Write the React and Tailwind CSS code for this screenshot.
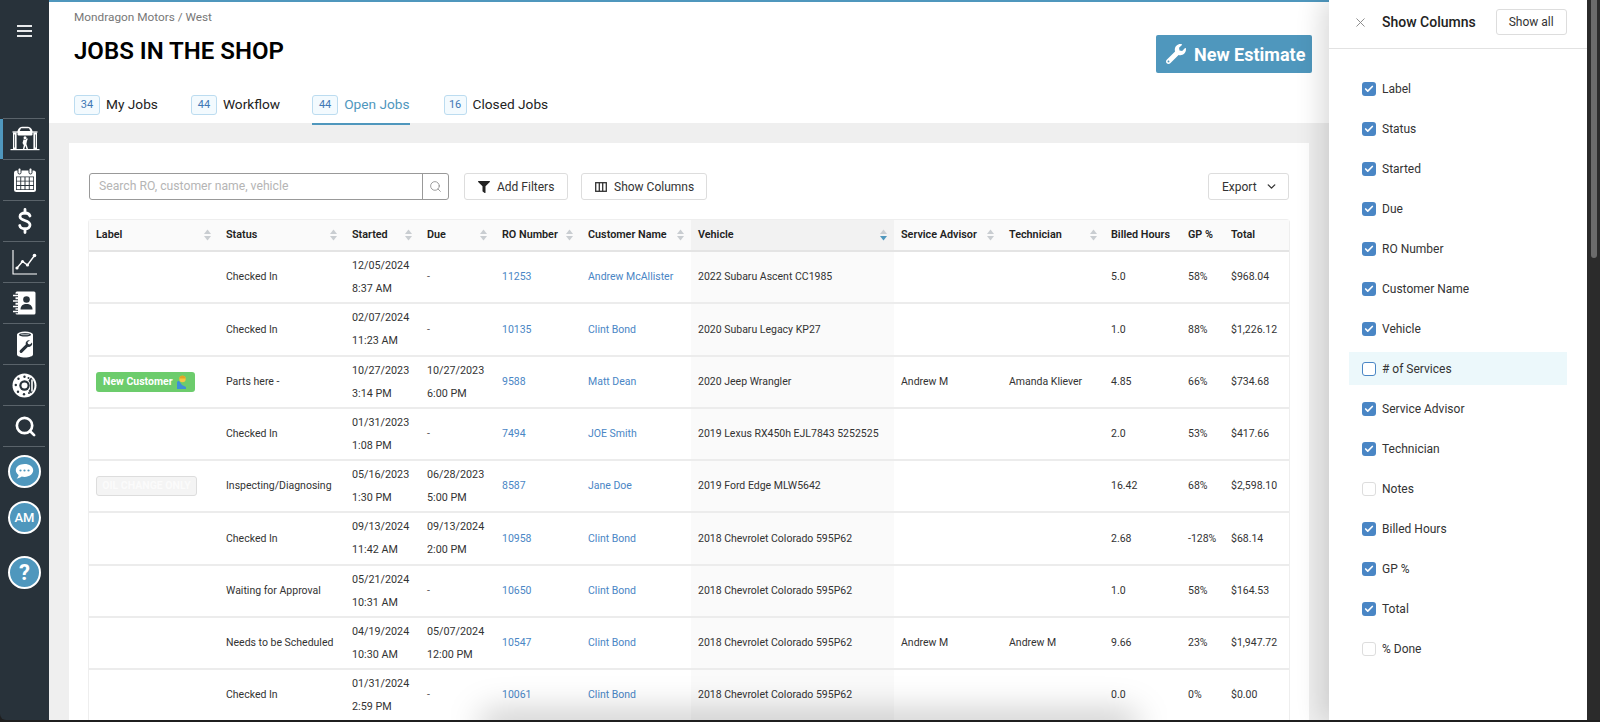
import { Search, X, ChevronDown, Check } from 'lucide-react'
import { FaWrench, FaFilter } from 'react-icons/fa'

const GRID = 'grid grid-cols-[129px_126px_75px_75px_86px_111px_203px_107px_103px_76px_43px_66px]'

const columns = [
  { label: 'Label', sort: true, pad: 'pl-[7px]' },
  { label: 'Status', sort: true, pad: 'pl-2' },
  { label: 'Started', sort: true, pad: 'pl-2' },
  { label: 'Due', sort: true, pad: 'pl-2' },
  { label: 'RO Number', sort: true, pad: 'pl-2' },
  { label: 'Customer Name', sort: true, pad: 'pl-2' },
  { label: 'Vehicle', sort: true, active: true, pad: 'pl-[7px]' },
  { label: 'Service Advisor', sort: true, pad: 'pl-[7px]' },
  { label: 'Technician', sort: true, pad: 'pl-2' },
  { label: 'Billed Hours', pad: 'pl-[7px]' },
  { label: 'GP %', pad: 'pl-2' },
  { label: 'Total', pad: 'pl-2' },
]

const jobs = [
  { status: 'Checked In', started: ['12/05/2024', '8:37 AM'], ro: '11253', customer: 'Andrew McAllister', vehicle: '2022 Subaru Ascent CC1985', hours: '5.0', gp: '58%', total: '$968.04' },
  { status: 'Checked In', started: ['02/07/2024', '11:23 AM'], ro: '10135', customer: 'Clint Bond', vehicle: '2020 Subaru Legacy KP27', hours: '1.0', gp: '88%', total: '$1,226.12' },
  { label: 'new', status: 'Parts here -', started: ['10/27/2023', '3:14 PM'], due: ['10/27/2023', '6:00 PM'], ro: '9588', customer: 'Matt Dean', vehicle: '2020 Jeep Wrangler', advisor: 'Andrew M', tech: 'Amanda Kliever', hours: '4.85', gp: '66%', total: '$734.68' },
  { status: 'Checked In', started: ['01/31/2023', '1:08 PM'], ro: '7494', customer: 'JOE Smith', vehicle: '2019 Lexus RX450h EJL7843 5252525', hours: '2.0', gp: '53%', total: '$417.66' },
  { label: 'oil', status: 'Inspecting/Diagnosing', started: ['05/16/2023', '1:30 PM'], due: ['06/28/2023', '5:00 PM'], ro: '8587', customer: 'Jane Doe', vehicle: '2019 Ford Edge MLW5642', hours: '16.42', gp: '68%', total: '$2,598.10' },
  { status: 'Checked In', started: ['09/13/2024', '11:42 AM'], due: ['09/13/2024', '2:00 PM'], ro: '10958', customer: 'Clint Bond', vehicle: '2018 Chevrolet Colorado 595P62', hours: '2.68', gp: '-128%', total: '$68.14' },
  { status: 'Waiting for Approval', started: ['05/21/2024', '10:31 AM'], ro: '10650', customer: 'Clint Bond', vehicle: '2018 Chevrolet Colorado 595P62', hours: '1.0', gp: '58%', total: '$164.53' },
  { status: 'Needs to be Scheduled', started: ['04/19/2024', '10:30 AM'], due: ['05/07/2024', '12:00 PM'], ro: '10547', customer: 'Clint Bond', vehicle: '2018 Chevrolet Colorado 595P62', advisor: 'Andrew M', tech: 'Andrew M', hours: '9.66', gp: '23%', total: '$1,947.72' },
  { status: 'Checked In', started: ['01/31/2024', '2:59 PM'], ro: '10061', customer: 'Clint Bond', vehicle: '2018 Chevrolet Colorado 595P62', hours: '0.0', gp: '0%', total: '$0.00' },
]

const showColumns = [
  { label: 'Label', on: true },
  { label: 'Status', on: true },
  { label: 'Started', on: true },
  { label: 'Due', on: true },
  { label: 'RO Number', on: true },
  { label: 'Customer Name', on: true },
  { label: 'Vehicle', on: true },
  { label: '# of Services', hover: true },
  { label: 'Service Advisor', on: true },
  { label: 'Technician', on: true },
  { label: 'Notes' },
  { label: 'Billed Hours', on: true },
  { label: 'GP %', on: true },
  { label: 'Total', on: true },
  { label: '% Done' },
]

const tabs = [
  { count: 34, label: 'My Jobs', badge: 'w-[26px]', gap: 'mr-[33px]' },
  { count: 44, label: 'Workflow', badge: 'w-[26px]', gap: 'mr-[32px]' },
  { count: 44, label: 'Open Jobs', badge: 'w-[26px]', gap: 'mr-[34px]', active: true },
  { count: 16, label: 'Closed Jobs', badge: 'w-[23px]', gap: '' },
]

const LiftIcon = () => (
  <svg width="30" height="30" viewBox="0 0 30 30" fill="none">
    <path d="M.5 25.600h29" stroke="white" strokeWidth="1.200" />
    <rect x="3" y="8.500" width="3.600" height="16.500" fill="white" />
    <rect x="23.400" y="8.500" width="3.600" height="16.500" fill="white" />
    <path d="M4.500 10.500v13M25.500 10.500v13" stroke="#28323a" strokeWidth=".7" />
    <path d="M2.500 8h25" stroke="white" strokeWidth="1.300" />
    <path d="M7.500 7c1-2.800 2.800-4.200 4.800-4.200h5.400c2 0 3.800 1.400 4.800 4.200v3.500c0 .8-.8 1-1.500 1H9c-.7 0-1.500-.2-1.500-1z" fill="white" />
    <path d="M11 4.300h8l1.300 2.700H9.700z" fill="#28323a" />
    <circle cx="15" cy="13.800" r="1.500" fill="white" />
    <path d="M13.500 15.500l-1 3.500 1.300 2.200-.9 3.800h1.500l.9-3.500 1.200 3.500h1.500l-1.600-5 .5-2.700.9-2.500-1.100-.5-1 1.500z" fill="white" />
  </svg>
)

const CalendarIcon = () => (
  <svg width="24" height="26" viewBox="0 0 24 26" fill="none">
    <rect x="1" y="3.500" width="22" height="21.500" rx="2.500" fill="white" />
    <rect x="5" y="1" width="3" height="6" rx="1.500" fill="white" stroke="#28323a" strokeWidth="1" />
    <rect x="16" y="1" width="3" height="6" rx="1.500" fill="white" stroke="#28323a" strokeWidth="1" />
    <path d="M3 9.500h18v13.500H3z" fill="#28323a" />
    <path d="M3.800 10.300h3.500v3.400H3.800zM8.200 10.300h3.300v3.400H8.200zM12.500 10.300h3.300v3.400h-3.300zM16.700 10.300h3.500v3.400h-3.500zM3.800 14.600h3.500v3.400H3.800zM8.200 14.600h3.300v3.400H8.200zM12.500 14.600h3.300v3.400h-3.300zM16.700 14.600h3.500v3.400h-3.500zM3.800 18.900h3.500v3.300H3.800zM8.200 18.900h3.300v3.300H8.200zM12.500 18.900h3.300v3.300h-3.300zM16.700 18.900h3.500v3.300h-3.500z" fill="white" />
  </svg>
)

const DollarIcon = () => (
  <svg width="14" height="26" viewBox="0 0 14 26" fill="none" stroke="white" strokeWidth="2.800" strokeLinecap="round">
    <path d="M12 8c-.6-2-2.500-3-5-3-3 0-5 1.400-5 3.500 0 5 10 3 10 8.500 0 2.300-2.200 3.800-5 3.800-2.800 0-4.800-1.200-5.300-3.300" />
    <path d="M7 1.500V5M7 21v3.500" />
  </svg>
)

const ChartIcon = () => (
  <svg width="26" height="26" viewBox="0 0 26 26" fill="none">
    <path d="M1 1v24h24" stroke="white" strokeWidth="1.100" />
    <path d="M5 19l5.500-6.500 5 3.500 7-9.500" stroke="white" strokeWidth="1.400" />
    <circle cx="5" cy="19" r="1.600" fill="white" />
    <circle cx="10.500" cy="12.500" r="1.600" fill="white" />
    <circle cx="15.500" cy="16" r="1.600" fill="white" />
    <circle cx="22.500" cy="6.500" r="1.800" fill="white" />
  </svg>
)

const ContactsIcon = () => (
  <svg width="23" height="24" viewBox="0 0 23 24" fill="none">
    <rect x="2.500" y="0.500" width="20" height="23" rx="1.500" fill="white" />
    <path d="M0 4.500h5M0 10h5M0 15.500h5M0 20.500h5" stroke="#28323a" strokeWidth="3.400" />
    <path d="M0 4.500h4.500M0 10h4.500M0 15.500h4.500M0 20.500h4.500" stroke="white" strokeWidth="1.500" strokeLinecap="round" />
    <circle cx="13.500" cy="8.500" r="3.300" fill="#28323a" />
    <path d="M7.500 18.500c0-3.700 2.500-5.500 6-5.500s6 1.800 6 5.500z" fill="#28323a" />
  </svg>
)

const OilCanIcon = () => (
  <svg width="18" height="27" viewBox="0 0 18 27" fill="none">
    <path d="M1 3.500v20c0 1.600 3.600 3 8 3s8-1.400 8-3v-20z" fill="white" />
    <ellipse cx="9" cy="3.500" rx="8" ry="3" fill="white" />
    <ellipse cx="9" cy="3.700" rx="6" ry="1.700" fill="#28323a" />
    <ellipse cx="9" cy="3.500" rx="4.500" ry="0.800" fill="#9aa1a6" />
    <path d="M14 9.500a3.200 3.200 0 0 0-4.200 4L4 19.300a1.500 1.500 0 0 0 2.200 2.100l5.800-5.700a3.200 3.200 0 0 0 4-4.200l-2 2-2-.5-.5-2z" fill="#28323a" />
  </svg>
)

const WheelIcon = () => (
  <svg width="25" height="25" viewBox="0 0 25 25" fill="none">
    <circle cx="12.500" cy="12.500" r="12" fill="white" />
    <circle cx="12.500" cy="12.500" r="5.200" fill="#28323a" />
    <circle cx="12.500" cy="12.500" r="3" fill="white" />
    <path d="M19 4.500a11 11 0 0 1 0 16l-2.500-2.500 1.500-2v-6l-1.500-2.500z" fill="#28323a" />
    <path d="M20 6.500v12" stroke="white" strokeWidth="1.600" />
    <g fill="#28323a">
      <circle cx="12.500" cy="3.700" r="1.200" />
      <circle cx="6.500" cy="5.800" r="1.200" />
      <circle cx="3.800" cy="12" r="1.200" />
      <circle cx="6" cy="18.800" r="1.200" />
      <circle cx="12" cy="21.300" r="1.200" />
      <circle cx="16.500" cy="5" r="1" />
      <circle cx="17" cy="20" r="1" />
    </g>
  </svg>
)

const ChatIcon = () => (
  <svg width="19" height="17" viewBox="0 0 19 17" fill="none">
    <path d="M9.500 1C4.500 1 .8 3.800.8 7.300c0 1.900 1.100 3.500 2.800 4.700-.2 1.300-.9 2.600-2 3.500 2 0 3.800-.8 5.100-1.900.9.200 1.800.3 2.800.3 5 0 8.700-2.900 8.700-6.600S14.500 1 9.500 1z" fill="white" />
    <circle cx="5.500" cy="7.500" r="1.100" fill="#4f97bd" />
    <circle cx="9.500" cy="7.500" r="1.100" fill="#4f97bd" />
    <circle cx="13.500" cy="7.500" r="1.100" fill="#4f97bd" />
  </svg>
)

const SortCaret = ({ active }) => (
  <svg width="7" height="12" viewBox="0 0 7 12" className="shrink-0">
    <path d="M3.500 0.500L7 5H0z" fill="#c9cdd1" />
    <path d="M3.500 11.500L0 7h7z" fill={active ? '#4f97bd' : '#c9cdd1'} />
  </svg>
)

const ColumnsIcon = () => (
  <svg width="12" height="10" viewBox="0 0 12 10" fill="none" stroke="#333" strokeWidth="1.300">
    <rect x="0.700" y="0.700" width="10.600" height="8.600" />
    <path d="M4.300 0.700v8.600M7.700 0.700v8.600" />
  </svg>
)

const PersonEmoji = () => (
  <svg width="12" height="14" viewBox="0 0 12 14" className="ml-[3px]">
    <path d="M1 14V7.500c0-1 .8-1.500 2-1.500l3 4 4 2v2z" fill="#3f8fd6" />
    <circle cx="6.500" cy="4" r="3.200" fill="#f6c544" />
    <path d="M3.200 3.500c.3-2 1.600-3 3.300-3s3 1 3.300 3z" fill="#e0a526" />
  </svg>
)

const navIcons = [LiftIcon, CalendarIcon, DollarIcon, ChartIcon, ContactsIcon, OilCanIcon, WheelIcon]

const Sidebar = () => (
  <div className="w-[49px] shrink-0 bg-[#28323a] flex flex-col rounded-bl-md">
    <div className="h-[118px] pt-[25px] pl-[17px] shrink-0">
      <div className="w-[15px] flex flex-col gap-[3px]">
        <div className="h-[2px] bg-[#e8eaeb]" />
        <div className="h-[2px] bg-[#e8eaeb]" />
        <div className="h-[2px] bg-[#e8eaeb]" />
      </div>
    </div>
    <div className="relative border-t border-[#5a636a] mx-[3px] w-[42px]" />
    {navIcons.map((Icon, i) => (
      <div key={i} className="relative">
        {i === 0 && <div className="absolute left-0 top-0 w-[3px] h-[40px] bg-[#4f97bd]" />}
        <div className="h-[40px] flex items-center justify-center">
          <Icon />
        </div>
        <div className="border-t border-[#5a636a] ml-[3px] w-[42px]" />
      </div>
    ))}
    <div className="h-[40px] flex items-center justify-center">
      <Search size={23} color="white" strokeWidth={2.800} className="ml-[1px]" />
    </div>
    <div className="border-t border-[#5a636a] ml-[3px] w-[42px]" />
    <div className="flex flex-col items-center pt-[8px] gap-[13px]">
      <div className="w-[33px] h-[33px] rounded-full bg-[#4f97bd] border-2 border-white flex items-center justify-center">
        <ChatIcon />
      </div>
      <div className="w-[33px] h-[33px] rounded-full bg-[#4f97bd] border-2 border-white flex items-center justify-center text-white text-[13px] font-medium">
        AM
      </div>
      <div className="w-[33px] h-[33px] mt-[9px] rounded-full bg-[#4f97bd] border-2 border-white flex items-center justify-center text-white text-[22px] font-bold">
        ?
      </div>
    </div>
  </div>
)

const Header = () => (
  <div className="h-[123px] bg-white border-t-2 border-[#4f97bd] pl-[25px] flex justify-between shrink-0">
    <div>
      <div className="text-[11.800px] leading-[14px] mt-[8px] text-[#777]">Mondragon Motors / West</div>
      <h1 className="text-[24px] leading-[30px] mt-[12px] font-semibold text-black">JOBS IN THE SHOP</h1>
      <div className="flex items-start mt-[29px]">
        {tabs.map((t) => (
          <div key={t.label} className={`flex h-[30px] gap-[6px] ${t.gap} ${t.active ? 'border-b-2 border-[#4f97bd]' : ''}`}>
            <div className={`${t.badge} h-[20px] rounded-[3px] border border-[#bcdcf0] bg-[#f3fafe] text-[#3f78b5] text-[11px] flex items-center justify-center`}>
              {t.count}
            </div>
            <div className={`text-[13.700px] leading-[18px] ${t.active ? 'text-[#4f97bd]' : 'text-[#222]'}`}>{t.label}</div>
          </div>
        ))}
      </div>
    </div>
    <div className="mt-[33px] mr-[275px] w-[156px] h-[38px] bg-[#4f97bd] rounded-[2px] flex items-center pl-[10px] text-white">
      <FaWrench size={20} />
      <span className="ml-[8px] text-[18px] font-bold whitespace-nowrap">New Estimate</span>
    </div>
  </div>
)

const OutlineButton = ({ className = '', children }) => (
  <div className={`h-[27px] rounded-[3px] border border-[#ddd] bg-white flex items-center text-[12px] text-[#333] ${className}`}>
    {children}
  </div>
)

const Toolbar = () => (
  <div className="flex items-center h-[27px] ml-[1px]">
    <div className="w-[360px] h-[27px] flex rounded-[3px] border border-[#999]">
      <div className="flex-1 pl-[9px] text-[12.200px] leading-[25px] text-[#b5b5b5]">Search RO, customer name, vehicle</div>
      <div className="w-[26px] border-l border-[#999] flex items-center justify-center">
        <Search size={13} color="#888" strokeWidth={1.500} />
      </div>
    </div>
    <OutlineButton className="ml-[15px] w-[104px] pl-[13px] gap-[7px]">
      <FaFilter size={12} color="#222" />
      Add Filters
    </OutlineButton>
    <OutlineButton className="ml-[13px] w-[126px] pl-[13px] gap-[7px]">
      <ColumnsIcon />
      Show Columns
    </OutlineButton>
    <OutlineButton className="ml-[501px] w-[81px] pl-[13px] gap-[8px] text-[12px]">
      Export
      <ChevronDown size={13} strokeWidth={2.500} />
    </OutlineButton>
  </div>
)

const TwoLines = ({ value }) => {
  if (!value) return <span className="text-[#555]">-</span>
  return (
    <div className="leading-[23px] text-[10.750px]">
      <div>{value[0]}</div>
      <div>{value[1]}</div>
    </div>
  )
}

const JobLabel = ({ type }) => {
  if (type === 'new') {
    return (
      <div className="w-[99px] h-[20px] rounded-[3px] bg-[#6ccc6c] text-white text-[10.500px] font-bold flex items-center pl-[7px] whitespace-nowrap">
        New Customer
        <PersonEmoji />
      </div>
    )
  }
  if (type === 'oil') {
    return (
      <div className="w-[101px] h-[20px] rounded-[3px] bg-[#f4f4f4] border border-[#ddd] text-[#fbfbfb] text-[10.500px] font-bold flex items-center justify-center whitespace-nowrap">
        OIL CHANGE ONLY
      </div>
    )
  }
  return null
}

const Cell = ({ className = 'pl-2', children }) => (
  <div className={`flex items-center min-w-0 whitespace-nowrap ${className}`}>{children}</div>
)

const JobRow = ({ job }) => (
  <div className={`${GRID} h-[52.250px] border-b-2 border-[#ececec] text-[10.500px] text-[#333]`}>
    <Cell className="pl-[7px]"><JobLabel type={job.label} /></Cell>
    <Cell>{job.status}</Cell>
    <Cell><TwoLines value={job.started} /></Cell>
    <Cell><TwoLines value={job.due} /></Cell>
    <Cell className="pl-2 text-[#4a86c5]">{job.ro}</Cell>
    <Cell className="pl-2 text-[#4a86c5]">{job.customer}</Cell>
    <Cell className="pl-[7px] bg-[#fafafa]">{job.vehicle}</Cell>
    <Cell className="pl-[7px]">{job.advisor}</Cell>
    <Cell>{job.tech}</Cell>
    <Cell className="pl-[7px]">{job.hours}</Cell>
    <Cell>{job.gp}</Cell>
    <Cell>{job.total}</Cell>
  </div>
)

const JobsTable = () => (
  <div className="mt-[19px] w-[1202px] border border-b-0 border-[#eee] rounded-t-[4px]">
    <div className={`${GRID} h-[32px] bg-[#fafafa] border-b-2 border-[#e4e4e4] text-[10.800px] font-semibold text-[#222]`}>
      {columns.map((c) => (
        <div key={c.label} className={`flex items-center justify-between ${c.pad} pr-[7px] whitespace-nowrap ${c.active ? 'bg-[#f2f2f2]' : ''}`}>
          {c.label}
          {c.sort && <SortCaret active={c.active} />}
        </div>
      ))}
    </div>
    {jobs.map((job) => (
      <JobRow key={job.ro} job={job} />
    ))}
  </div>
)

const ColumnOption = ({ item }) => (
  <div className={`h-[33px] flex items-center pl-[13px] gap-[6px] ${item.hover ? 'bg-[#ecf8fb]' : ''}`}>
    {item.on ? (
      <div className="w-[14px] h-[14px] rounded-[3px] bg-[#4a86c5] flex items-center justify-center">
        <Check size={10} color="white" strokeWidth={4} />
      </div>
    ) : (
      <div className={`w-[14px] h-[14px] rounded-[3px] bg-white border ${item.hover ? 'border-[#4a86c5]' : 'border-[#ddd]'}`} />
    )}
    <span className="text-[12px] text-[#333]">{item.label}</span>
  </div>
)

const ColumnsPanel = () => (
  <div className="absolute top-0 right-0 bottom-0 w-[258px] bg-white shadow-[-8px_0_24px_rgba(0,0,0,0.14)]">
    <div className="h-[49px] border-b border-[#e2e2e2] flex items-center pl-[24px] pb-[4px]">
      <X size={15} color="#888" strokeWidth={1.500} />
      <span className="ml-[14px] text-[14px] font-medium text-[#222]">Show Columns</span>
      <div className="ml-[20px] w-[71px] h-[26px] rounded-[3px] border border-[#ddd] text-[12px] text-[#333] flex items-center justify-center">
        Show all
      </div>
    </div>
    <div className="pt-[23px] pl-[20px] w-[238px] flex flex-col gap-[7px]">
      {showColumns.map((item) => (
        <ColumnOption key={item.label} item={item} />
      ))}
    </div>
  </div>
)

const Scrollbar = () => (
  <div className="w-[13px] shrink-0 bg-[#2b2b2b] pl-[4px]">
    <div className="w-[6px] h-[258px] rounded-b-[3px] bg-[#6b6b6b]" />
  </div>
)

const App = () => {
  return (
    <div className="w-[1600px] h-[722px] bg-[#1f1f1f] overflow-hidden font-['Roboto',sans-serif]">
      <div className="h-[720px] flex">
        <Sidebar />
        <div className="relative flex-1 min-w-0 overflow-hidden flex flex-col bg-[#efefef]">
          <Header />
          <div className="mt-[20px] ml-[20px] w-[1240px] flex-1 bg-white pl-[19px] pt-[30px] overflow-hidden">
            <Toolbar />
            <JobsTable />
          </div>
          <div className="absolute left-[430px] bottom-[-20px] w-[660px] h-[30px] bg-black/20 blur-[16px] rounded-full" />
          <ColumnsPanel />
        </div>
        <Scrollbar />
      </div>
    </div>
  )
}

export default App
